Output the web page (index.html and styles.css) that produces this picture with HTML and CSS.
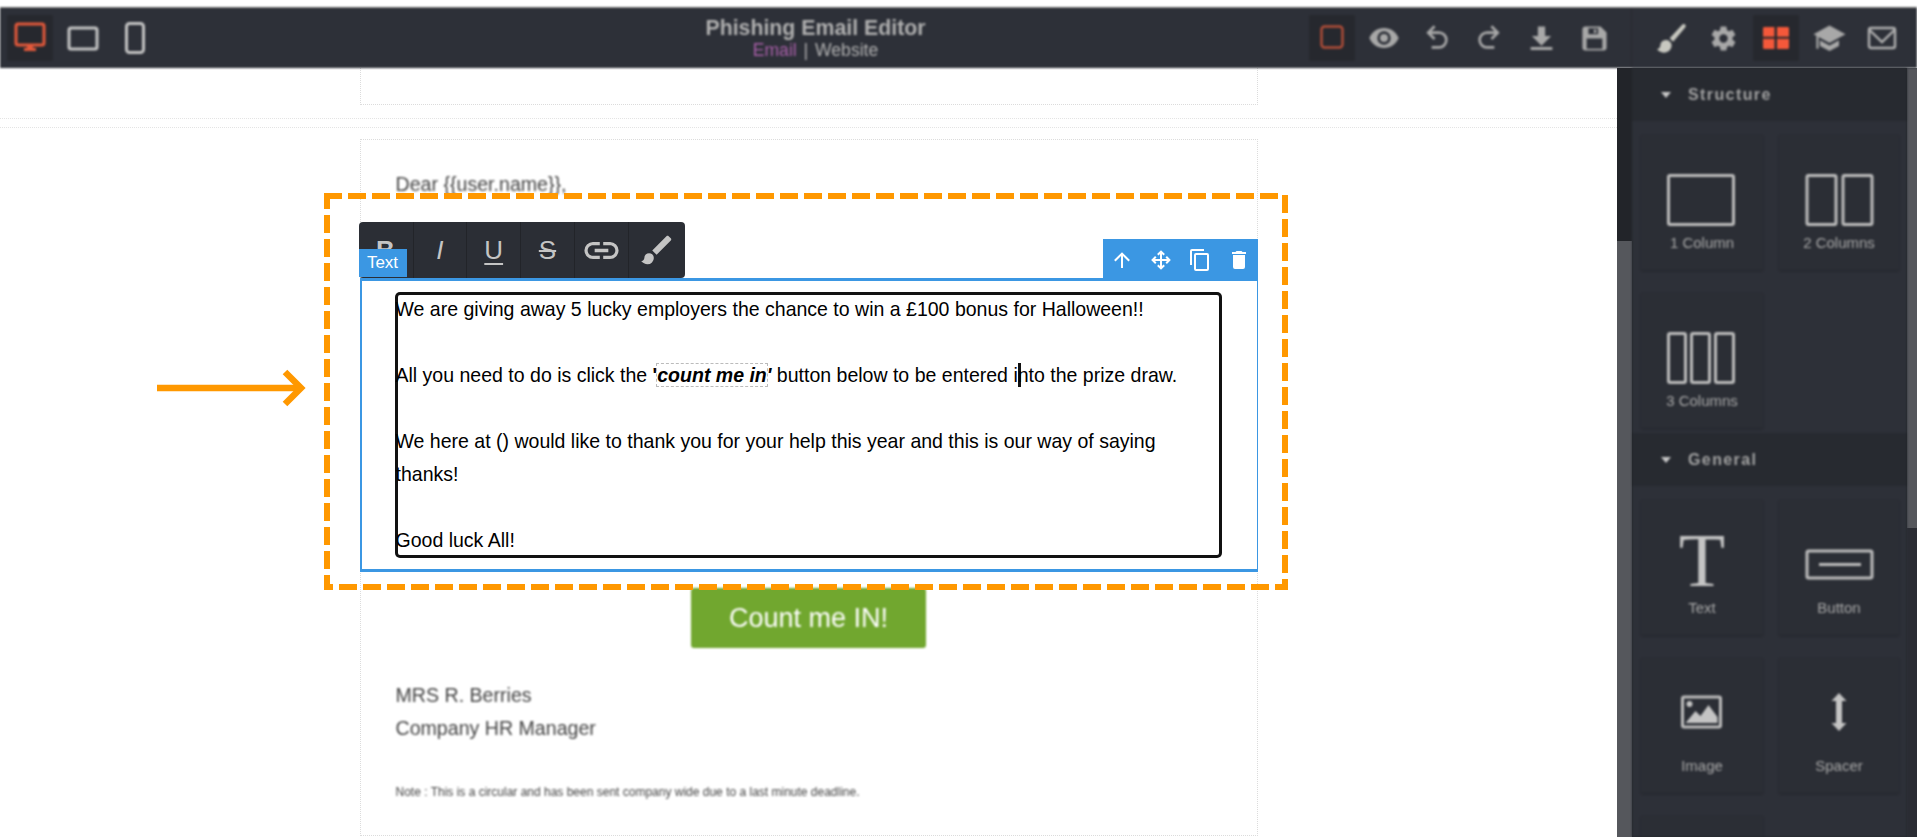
FILE: index.html
```html
<!DOCTYPE html>
<html lang="en">
<head>
    <meta charset="UTF-8">
    <meta name="viewport" content="width=device-width, initial-scale=1.0">
    <title>Phishing Email Editor</title>
    <link rel="stylesheet" href="styles.css">
</head>
<body>

    <!-- top bar -->
    <nav class="topbar">
        <div class="topbar-main">
            <div class="btn-group devices">
                <a class="bar-btn active">
                    <svg class="ico-lg" viewBox="0 0 32 32"><rect x="2" y="2" width="28" height="21" rx="2" fill="none" stroke="#e2583a" stroke-width="3"/><path d="M13 23h6v3h3v3H10v-3h3z" fill="#e2583a"/></svg>
                </a>
                <a class="bar-btn">
                    <svg class="ico-lg" viewBox="0 0 32 32"><rect x="2" y="6" width="28" height="21" rx="2" fill="none" stroke="#c4c4c4" stroke-width="3"/></svg>
                </a>
                <a class="bar-btn">
                    <svg class="ico-lg" viewBox="0 0 32 32"><rect x="7.5" y="1.5" width="17" height="29" rx="3" fill="none" stroke="#c4c4c4" stroke-width="3"/></svg>
                </a>
            </div>
            <div class="title">
                <b>Phishing Email Editor</b>
                <span><i class="mode-on">Email</i> | Website</span>
            </div>
            <div class="btn-group actions">
                <a class="bar-btn active">
                    <svg class="ico-lg" viewBox="0 0 32 32"><rect x="5.5" y="4.5" width="21" height="21" rx="3" fill="none" stroke="#b04d38" stroke-width="2.4"/></svg>
                </a>
                <a class="bar-btn"><svg class="ico ico-eye" viewBox="0 0 24 24"><path d="M12,9A3,3 0 0,0 9,12A3,3 0 0,0 12,15A3,3 0 0,0 15,12A3,3 0 0,0 12,9M12,17A5,5 0 0,1 7,12A5,5 0 0,1 12,7A5,5 0 0,1 17,12A5,5 0 0,1 12,17M12,4.5C7,4.5 2.73,7.61 1,12C2.73,16.39 7,19.5 12,19.5C17,19.5 21.27,16.39 23,12C21.27,7.61 17,4.5 12,4.5Z"/></svg></a>
                <a class="bar-btn"><svg class="ico ico-undo" viewBox="0 0 24 24"><path d="M13.5,7A6.5,6.5 0 0,1 20,13.5A6.5,6.5 0 0,1 13.5,20H8V18H13.5C16,18 18,16 18,13.5C18,11 16,9 13.5,9H7.83L10.91,12.09L9.5,13.5L4,8L9.5,2.5L10.92,3.91L7.83,7H13.5Z"/></svg></a>
                <a class="bar-btn"><svg class="ico ico-undo mirror" viewBox="0 0 24 24"><path d="M13.5,7A6.5,6.5 0 0,1 20,13.5A6.5,6.5 0 0,1 13.5,20H8V18H13.5C16,18 18,16 18,13.5C18,11 16,9 13.5,9H7.83L10.91,12.09L9.5,13.5L4,8L9.5,2.5L10.92,3.91L7.83,7H13.5Z"/></svg></a>
                <a class="bar-btn"><svg class="ico" viewBox="0 0 24 24"><path d="M3,19H21V21.5H3ZM20,10H15V2H9V10H4L12,18Z"/></svg></a>
                <a class="bar-btn"><svg class="ico" viewBox="0 0 24 24"><path fill-rule="evenodd" d="M17,2H4.5A2.5,2.5 0 0 0 2,4.5V19.5A2.5,2.5 0 0 0 4.5,22H19.5A2.5,2.5 0 0 0 22,19.5V7ZM7,3.5H15V8.5H7ZM11.5,4.5V7.5H13.5V4.5ZM5.5,12H18.5V20.5H5.5Z"/></svg></a>
            </div>
        </div>
        <div class="topbar-tabs">
            <a class="bar-btn"><svg class="ico ico-brush" viewBox="0 0 24 24"><path d="M22.5,1.8C21.8,1.2 20.8,1.4 20.2,2.2L11,12.2L13.6,14.8L22.6,4.2C23.2,3.4 23.2,2.4 22.5,1.8ZM8,13.5A4,4 0 0,0 4,17.5C4,19.3 2.8,20.2 1.5,20.5C2.8,22.2 5,23 7,23A5.5,5.5 0 0,0 12.5,17.5A4.2,4.2 0 0,0 8,13.5Z"/></svg></a>
            <a class="bar-btn"><svg class="ico" viewBox="0 0 24 24"><path d="M12,15.5A3.5,3.5 0 0,1 8.5,12A3.5,3.5 0 0,1 12,8.5A3.5,3.5 0 0,1 15.5,12A3.5,3.5 0 0,1 12,15.5M19.43,12.97C19.47,12.65 19.5,12.33 19.5,12C19.5,11.67 19.47,11.34 19.43,11L21.54,9.37C21.73,9.22 21.78,8.95 21.66,8.73L19.66,5.27C19.54,5.05 19.27,4.96 19.05,5.05L16.56,6.05C16.04,5.66 15.5,5.32 14.87,5.07L14.5,2.42C14.46,2.18 14.25,2 14,2H10C9.75,2 9.54,2.18 9.5,2.42L9.13,5.07C8.5,5.32 7.96,5.66 7.44,6.05L4.95,5.05C4.73,4.96 4.46,5.05 4.34,5.27L2.34,8.73C2.21,8.95 2.27,9.22 2.46,9.37L4.57,11C4.53,11.34 4.5,11.67 4.5,12C4.5,12.33 4.53,12.65 4.57,12.97L2.46,14.63C2.27,14.78 2.21,15.05 2.34,15.27L4.34,18.73C4.46,18.95 4.73,19.03 4.95,18.95L7.44,17.94C7.96,18.34 8.5,18.68 9.13,18.93L9.5,21.58C9.54,21.82 9.75,22 10,22H14C14.25,22 14.46,21.82 14.5,21.58L14.87,18.93C15.5,18.67 16.04,18.34 16.56,17.94L19.05,18.95C19.27,19.03 19.54,18.95 19.66,18.73L21.66,15.27C21.78,15.05 21.73,14.78 21.54,14.63L19.43,12.97Z"/></svg></a>
            <a class="bar-btn active"><svg class="ico-grid" viewBox="0 0 26 26" preserveAspectRatio="none"><path d="M0 1.5A1.5 1.5 0 0 1 1.5 0H11.5V11.5H0ZM14 0H24.5A1.5 1.5 0 0 1 26 1.5V11.5H14ZM0 14H11.5V26H1.5A1.5 1.5 0 0 1 0 24.5ZM14 14H26V24.5A1.5 1.5 0 0 1 24.5 26H14Z"/></svg></a>
            <a class="bar-btn"><svg class="ico ico-cap" viewBox="0 0 24 24"><path d="M12,3L1,9L3,10.1V19H4.5V10.9L12,15L23,9ZM5.5,13.2V17.2L12,20.5L18.5,17.2V13.2L12,16.8Z"/></svg></a>
            <a class="bar-btn"><svg class="ico-lg" viewBox="0 0 32 32"><rect x="3" y="6" width="26" height="20" rx="2" fill="none" stroke="#b0b0b0" stroke-width="2.4"/><path d="M3.5 8L16 20L28.5 8" fill="none" stroke="#b0b0b0" stroke-width="2.4"/></svg></a>
        </div>
    </nav>

    <div class="workspace">
        <!-- email canvas -->
        <main class="canvas">
            <div class="sheet sheet-top"></div>
            <div class="row-sep"></div>
            <div class="sheet sheet-mail">
                <p class="mail-line greeting">Dear {{user.name}},</p>

                <div class="text-frame">
                    <div class="rte-bar">
                        <span class="rte-btn rte-b">B</span>
                        <span class="rte-btn rte-i">I</span>
                        <span class="rte-btn rte-u">U</span>
                        <span class="rte-btn rte-s">S</span>
                        <span class="rte-btn"><svg class="rte-ico rte-link" viewBox="0 0 24 24"><path d="M3.9,12C3.9,10.29 5.29,8.9 7,8.9H11V7H7A5,5 0 0,0 2,12A5,5 0 0,0 7,17H11V15.1H7C5.29,15.1 3.9,13.71 3.9,12M8,13H16V11H8V13M17,7H13V8.9H17C18.71,8.9 20.1,10.29 20.1,12C20.1,13.71 18.71,15.1 17,15.1H13V17H17A5,5 0 0,0 22,12A5,5 0 0,0 17,7Z"/></svg></span>
                        <span class="rte-btn"><svg class="rte-ico" viewBox="0 0 24 24"><path d="M20.71,4.63L19.37,3.29C19,2.9 18.35,2.9 17.96,3.29L9,12.25L11.75,15L20.71,6.04C21.1,5.65 21.1,5 20.71,4.63M7,14A3,3 0 0,0 4,17C4,18.31 2.84,19 2,19C2.92,20.22 4.5,21 6,21A4,4 0 0,0 10,17A3,3 0 0,0 7,14Z"/></svg></span>
                    </div>
                    <span class="frame-label">Text</span>
                    <div class="frame-tools">
                        <svg viewBox="0 0 24 24"><path d="M13,20H11V8L5.5,13.5L4.08,12.08L12,4.16L19.92,12.08L18.5,13.5L13,8V20Z"/></svg>
                        <svg viewBox="0 0 24 24"><path d="M13,11H18L16.5,9.5L17.92,8.08L21.84,12L17.92,15.92L16.5,14.5L18,13H13V18L14.5,16.5L15.92,17.92L12,21.84L8.08,17.92L9.5,16.5L11,18V13H6L7.5,14.5L6.08,15.92L2.16,12L6.08,8.08L7.5,9.5L6,11H11V6L9.5,7.5L8.08,6.08L12,2.16L15.92,6.08L14.5,7.5L13,6V11Z"/></svg>
                        <svg viewBox="0 0 24 24"><path d="M19,21H8V7H19M19,5H8A2,2 0 0,0 6,7V21A2,2 0 0,0 8,23H19A2,2 0 0,0 21,21V7A2,2 0 0,0 19,5M16,1H4A2,2 0 0,0 2,3V17H4V3H16V1Z"/></svg>
                        <svg viewBox="0 0 24 24"><path d="M19,4H15.5L14.5,3H9.5L8.5,4H5V6H19M6,19A2,2 0 0,0 8,21H16A2,2 0 0,0 18,19V7H6V19Z"/></svg>
                    </div>
                    <div class="text-box">
                        We are giving away 5 lucky employers the chance to win a £100 bonus for Halloween!!<br><br>
                        All you need to do is click the <b>'<i class="hl">count me in</i><i>'</i></b> button below to be entered i<span class="caret"></span>nto the prize draw.<br><br>
                        We here at () would like to thank you for your help this year and this is our way of saying thanks!<br><br>
                        Good luck All!
                    </div>
                </div>

                <div class="cta-row"><a class="cta">Count me IN!</a></div>

                <p class="mail-line sign-first">MRS R. Berries</p>
                <p class="mail-line">Company HR Manager</p>
                <p class="mail-note">Note : This is a circular and has been sent company wide due to a last minute deadline.</p>
            </div>
        </main>

        <div class="canvas-scroll"><div class="canvas-thumb"></div></div>

        <!-- blocks panel -->
        <aside class="panel">
            <div class="panel-head"><span class="caret-down"></span>Structure</div>
            <div class="block-grid">
                <div class="block">
                    <svg class="block-ico" viewBox="0 0 70 52"><rect x="1.5" y="1.5" width="65" height="49" rx="1.5"/></svg>
                    <span>1 Column</span>
                </div>
                <div class="block">
                    <svg class="block-ico" viewBox="0 0 70 52"><rect x="3" y="1.5" width="29" height="49" rx="1.5"/><rect x="39" y="1.5" width="29" height="49" rx="1.5"/></svg>
                    <span>2 Columns</span>
                </div>
                <div class="block">
                    <svg class="block-ico" viewBox="0 0 70 52"><rect x="1.5" y="1.5" width="17" height="49" rx="1.5"/><rect x="24.5" y="1.5" width="18" height="49" rx="1.5"/><rect x="48.5" y="1.5" width="18" height="49" rx="1.5"/></svg>
                    <span>3 Columns</span>
                </div>
            </div>
            <div class="panel-head"><span class="caret-down"></span>General</div>
            <div class="block-grid">
                <div class="block">
                    <span class="block-t">T</span>
                    <span>Text</span>
                </div>
                <div class="block">
                    <svg class="block-ico" viewBox="0 0 70 52"><rect x="3" y="12" width="65" height="27" rx="1.5"/><path d="M15 25.5H57"/></svg>
                    <span>Button</span>
                </div>
                <div class="block">
                    <svg class="block-ico" viewBox="0 10 70 52"><rect x="15.5" y="10" width="38" height="30" rx="1.5"/><circle class="solid" cx="22.5" cy="17" r="3"/><path class="solid" d="M18.5 36L28.5 24L33.5 29L41.5 18L50.5 30V36Z"/></svg>
                    <span>Image</span>
                </div>
                <div class="block">
                    <svg class="block-ico" viewBox="0 10 70 52"><path class="solid" d="M35 6L42.5 14H38V36H42.5L35 44L27.5 36H32V14H27.5Z"/></svg>
                    <span>Spacer</span>
                </div>
                <div class="block"></div>
            </div>
        </aside>

        <div class="panel-scroll"><div class="panel-thumb"></div></div>
    </div>

    <!-- annotation drawn over the screenshot -->
    <svg class="annot" viewBox="0 0 1917 837">
        <g class="dash">
            <line x1="324" y1="196" x2="1282" y2="196"/>
            <line x1="1285" y1="195" x2="1285" y2="590"/>
            <line class="dash-left" x1="327" y1="194" x2="327" y2="590"/>
            <line class="dash-bottom" x1="324" y1="587" x2="1284" y2="587"/>
        </g>
        <line class="arrow" x1="157" y1="388" x2="299" y2="388"/>
        <polyline class="arrow" points="285,372 301,388 285,404"/>
    </svg>

</body>
</html>
```

FILE: styles.css
```css
/* page */
body {
    margin: 0;
    height: 837px;
    overflow: hidden;
    position: relative;
    background: #fff;
    color: #000;
    font-family: "Liberation Sans", Arial, sans-serif;
    padding-top: 7px;
    box-sizing: border-box;
}

/* top bar */
.topbar {
    display: flex;
    height: 61px;
    background: #2d3038;
    border-top: 1px solid #777;
    box-sizing: border-box;
    filter: blur(0.8px);
}

.topbar-main {
    width: 1632px;
    display: grid;
    grid-template-columns: 1fr auto 1fr;
    align-items: center;
    padding: 0 14px;
    box-sizing: border-box;
    border-right: 1px solid #282a30;
}

.topbar-tabs {
    flex: 1;
    display: flex;
    align-items: center;
    gap: 6.7px;
    padding-left: 16px;
}

.btn-group {
    display: flex;
    gap: 6.5px;
}

.devices {
    margin-left: -7px;
}

.actions {
    justify-content: flex-end;
}

.bar-btn {
    width: 46px;
    height: 46px;
    display: flex;
    align-items: center;
    justify-content: center;
    border-radius: 2px;
}

.bar-btn.active {
    background: #26282e;
}

.ico-lg {
    width: 32px;
    height: 32px;
}

.ico {
    width: 29px;
    height: 29px;
    fill: #a8a8a8;
}

.ico-eye,
.ico-undo,
.ico-brush {
    width: 32px;
    height: 32px;
}

.ico-brush {
    fill: #c8c8c0;
}

.ico-cap {
    width: 35px;
    height: 35px;
}

.ico-grid {
    width: 26px;
    height: 22px;
    fill: #f4583a;
}

.mirror {
    transform: scaleX(-1);
}

.title {
    text-align: center;
    color: #b0b0b0;
    line-height: 20px;
}

.title b {
    display: block;
    font-size: 21.3px;
    line-height: 24px;
}

.title span {
    font-size: 17.6px;
    word-spacing: 2px;
}

.mode-on {
    color: #a85fa8;
    font-style: normal;
}

/* canvas */
.workspace {
    display: flex;
    height: 769px;
    background: #222429;
}

.canvas {
    width: 1617px;
    background: #fff;
    overflow: hidden;
}

.sheet {
    width: 898px;
    margin: 0 auto;
    border: 1px dotted #dcdcdc;
    box-sizing: border-box;
}

.sheet-top {
    height: 37px;
    border-top: 0;
}

.row-sep {
    height: 8px;
    margin-top: 13px;
    border-top: 1px dotted #e4e4e4;
    border-bottom: 1px dotted #e4e4e4;
}

.sheet-mail {
    margin-top: 11px;
    height: 697px;
    padding-top: 28px;
}

.mail-line {
    margin: 0 0 0 35px;
    font-size: 19.6px;
    line-height: 33px;
    color: #444;
    filter: blur(1px);
}

.greeting {
    margin-bottom: 77px;
}

.sign-first {
    margin-top: 31px;
}

.mail-note {
    margin: 39px 0 0 35px;
    font-size: 12px;
    line-height: 16px;
    color: #444;
    filter: blur(0.8px);
}

/* selected text block */
.text-frame {
    position: relative;
    margin-left: -1px;
    margin-right: -1px;
    height: 294px;
    border: solid #3b97e3;
    border-width: 3px 1px 3px 2px;
    box-sizing: border-box;
    padding: 11px 35px 0 33px;
}

.text-box {
    height: 266px;
    padding: 1px 0 0 1px;
    border-radius: 5px;
    box-shadow: inset 0 0 0 3px #111;
    box-sizing: border-box;
    font-size: 19.52px;
    line-height: 33px;
}

.hl {
    outline: 1px dashed #bbb;
}

.caret {
    display: inline-block;
    height: 24px;
    margin-right: -3px;
    border-left: 3px solid #111;
    vertical-align: -5px;
}

.rte-bar {
    position: absolute;
    left: -3px;
    top: -59px;
    display: flex;
    height: 56px;
    background: #2b2e35;
    border-radius: 4px;
    overflow: hidden;
}

.rte-btn {
    width: 52.8px;
    display: flex;
    align-items: center;
    justify-content: center;
    border-right: 1px solid #222429;
    color: #c4c4c4;
    font-size: 26px;
}

.rte-btn:first-child {
    width: 54px;
}

.rte-btn:last-child {
    width: 56px;
    border-right: 0;
}

.rte-b {
    font-weight: bold;
}

.rte-i {
    font-style: italic;
}

.rte-u {
    text-decoration: underline;
    text-underline-offset: 4px;
}

.rte-s {
    text-decoration: line-through;
}

.rte-ico {
    width: 38px;
    height: 38px;
    fill: #c4c4c4;
}

.rte-link {
    width: 41px;
    height: 41px;
}

.frame-label {
    position: absolute;
    left: -3px;
    top: -32px;
    width: 48px;
    height: 28px;
    background: #3b97e3;
    color: #fff;
    font-size: 17px;
    line-height: 28px;
    text-align: center;
}

.frame-tools {
    position: absolute;
    right: -1px;
    top: -42px;
    width: 155px;
    height: 42px;
    display: flex;
    align-items: center;
    gap: 15px;
    padding-left: 7px;
    box-sizing: border-box;
    background: #3b97e3;
}

.frame-tools svg {
    width: 24px;
    height: 24px;
    fill: #fff;
}

/* button */
.cta-row {
    display: flex;
    justify-content: center;
    margin-top: 16px;
}

.cta {
    width: 235px;
    height: 60px;
    background: #71a72f;
    border-radius: 3px;
    color: #fff;
    font-size: 27px;
    line-height: 60px;
    text-align: center;
    filter: blur(0.8px);
}

/* scrollbars */
.canvas-scroll {
    width: 15px;
    background: #222429;
    filter: blur(0.5px);
}

.canvas-thumb {
    margin-top: 173px;
    height: 596px;
    background: #55575c;
}

.panel-scroll {
    width: 10px;
    background: #2a2c33;
}

.panel-thumb {
    height: 460px;
    background: #55575c;
}

/* blocks panel */
.panel {
    width: 275px;
    background: #2d3038;
    overflow: hidden;
    filter: blur(0.8px);
}

.panel-head {
    height: 53px;
    display: flex;
    align-items: center;
    background: #272a30;
    padding-left: 29px;
    color: #a2a2a2;
    font-size: 16px;
    font-weight: bold;
    letter-spacing: 1.4px;
}

.caret-down {
    width: 0;
    height: 0;
    margin-right: 17px;
    border: 5px solid transparent;
    border-top: 6px solid #c8c8c8;
    border-bottom: 0;
}

.block-grid {
    display: grid;
    grid-template-columns: 122px 120px;
    grid-auto-rows: 135px;
    gap: 23px 16px;
    padding: 14px 0 5px 9px;
}

.block {
    display: flex;
    flex-direction: column;
    align-items: center;
    background: #2b2e35;
    border-radius: 2px;
    box-shadow: 0 1px 3px rgba(0, 0, 0, 0.25);
    color: #a8a8a8;
    font-size: 15px;
    line-height: 18px;
}

.block-ico {
    width: 70px;
    height: 52px;
    margin-top: 39px;
    margin-bottom: 8px;
    fill: none;
    stroke: #bcbcbc;
    stroke-width: 3;
    overflow: visible;
}

.block-ico .solid {
    fill: #c4c4c4;
    stroke: none;
}

.block-t {
    height: 52px;
    margin-top: 27px;
    margin-bottom: 20px;
    color: #c4c4c4;
    font-family: "Liberation Serif", serif;
    font-size: 76px;
    line-height: 66px;
}

/* annotation */
.annot {
    position: absolute;
    left: 0;
    top: 0;
    width: 1917px;
    height: 837px;
    pointer-events: none;
}

.dash line {
    stroke: #ff9800;
    stroke-width: 6;
    stroke-dasharray: 18 6;
}

.dash .dash-left {
    stroke-dashoffset: 3;
}

.dash .dash-bottom {
    stroke-dashoffset: 9;
}

.arrow {
    fill: none;
    stroke: #ff9800;
    stroke-width: 6.5;
}
```
